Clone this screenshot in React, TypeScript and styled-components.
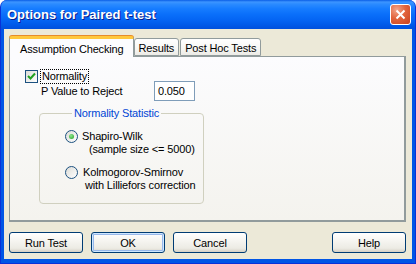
import React from 'react'
import styled, { createGlobalStyle } from 'styled-components'

const GlobalStyle = createGlobalStyle`
  html, body {
    margin: 0;
    padding: 0;
    background: #ffffff;
  }
  body {
    font-family: "Liberation Sans", Arial, sans-serif;
    font-size: 11px;
    letter-spacing: -0.15px;
    color: #000000;
  }
`

const Window = styled.div`
  width: 416px;
  height: 264px;
  box-sizing: border-box;
  display: flex;
  flex-direction: column;
  background: #0055e5;
  border: 1px solid #0831d9;
  border-top: none;
  border-radius: 7px 7px 0 0;
  overflow: hidden;
`

const TitleBar = styled.div`
  height: 29px;
  flex: none;
  display: flex;
  align-items: center;
  justify-content: space-between;
  padding: 0 4px 0 6px;
  background: linear-gradient(
    #0a5ee6 0%,
    #3d95ff 7%,
    #2b8bff 14%,
    #167cff 30%,
    #0a6ffa 50%,
    #0464f3 70%,
    #005ae9 85%,
    #0050dd 100%
  );
`

const Title = styled.span`
  font-family: "Liberation Sans", Arial, sans-serif;
  font-size: 13px;
  font-weight: bold;
  letter-spacing: 0;
  color: #ffffff;
  text-shadow: 1px 1px 0 #0a1e8c;
`

const CloseButton = styled.div`
  width: 19px;
  height: 19px;
  border: 1px solid #ffffff;
  border-radius: 3px;
  display: flex;
  align-items: center;
  justify-content: center;
  background: radial-gradient(circle at 30% 25%, #f2a58b 0%, #e2643c 45%, #c9411e 100%);
`

const Client = styled.div`
  flex: 1;
  margin: 0 3px 4px 3px;
  background: #ece9d8;
  display: flex;
  flex-direction: column;
  padding: 7px 6px 0 5px;
`

const TabStrip = styled.div`
  display: flex;
  align-items: flex-end;
  height: 20px;
  position: relative;
  z-index: 1;
`

const Tab = styled.div<{ $active?: boolean }>`
  box-sizing: border-box;
  height: ${({ $active }) => ($active ? '21px' : '18px')};
  margin-bottom: ${({ $active }) => ($active ? '-1px' : '0')};
  margin-right: ${({ $active }) => ($active ? '0' : '1px')};
  padding: ${({ $active }) => ($active ? '2px 9px 0 10px' : '1px 4px 0 4px')};
  display: flex;
  align-items: center;
  border: 1px solid #919b9c;
  border-bottom: ${({ $active }) => ($active ? 'none' : '1px solid #919b9c')};
  border-radius: 3px 3px 0 0;
  background: ${({ $active }) =>
    $active ? '#fcfcfe' : 'linear-gradient(#ffffff 0%, #f7f7f4 60%, #ecebe6 100%)'};
  border-top: ${({ $active }) => ($active ? '3px solid #ffc83c' : '1px solid #919b9c')};
  box-shadow: ${({ $active }) => ($active ? '0 -1px 0 #e68b2c' : 'none')};
  white-space: nowrap;
`

const Panel = styled.div`
  flex: none;
  height: 166px;
  box-sizing: border-box;
  border: 1px solid #919b9c;
  border-right-width: 2px;
  border-bottom-width: 2px;
  background: linear-gradient(#fcfcfe, #f4f3ee);
  padding: 12px 0 0 15px;
  display: flex;
  flex-direction: column;
`

const Row = styled.div<{ $indent?: number }>`
  display: flex;
  align-items: center;
  padding-left: ${({ $indent }) => $indent ?? 0}px;
`

const CheckBox = styled.div`
  width: 13px;
  height: 13px;
  box-sizing: border-box;
  border: 1px solid #1c5180;
  background: linear-gradient(135deg, #dcdcd7, #ffffff);
  display: flex;
  align-items: center;
  justify-content: center;
`

const FocusLabel = styled.span`
  margin-left: 2px;
  padding: 0 1px;
  border: 1px dotted #000000;
  line-height: 13px;
`

const FieldLabel = styled.span`
  width: 113px;
`

const TextInput = styled.div`
  width: 41px;
  height: 20px;
  box-sizing: border-box;
  border: 1px solid #7f9db9;
  background: #ffffff;
  display: flex;
  align-items: center;
  padding-left: 3px;
`

const Group = styled.fieldset`
  margin: 6px 0 0 14px;
  width: 165px;
  height: 97px;
  box-sizing: border-box;
  border: 1px solid #d0d0bf;
  border-radius: 4px;
  padding: 11px 0 0 25px;
  display: flex;
  flex-direction: column;
  gap: 10px;
`

const Legend = styled.legend`
  color: #0046d5;
  padding: 0 2px;
  margin-left: 7px;
`

const RadioOption = styled.div`
  display: flex;
  align-items: flex-start;
`

const Radio = styled.div<{ $checked?: boolean }>`
  width: 13px;
  height: 13px;
  box-sizing: border-box;
  border: 1px solid #1c5180;
  border-radius: 50%;
  flex: none;
  background: linear-gradient(135deg, #dcdcd7, #ffffff);
  display: flex;
  align-items: center;
  justify-content: center;
  &::after {
    content: '';
    display: ${({ $checked }) => ($checked ? 'block' : 'none')};
    width: 5px;
    height: 5px;
    border-radius: 50%;
    background: radial-gradient(circle at 40% 35%, #8fe58f, #21a121);
  }
`

const RadioText = styled.div`
  display: flex;
  flex-direction: column;
  margin-left: 4px;
  line-height: 13px;
`

const Line = styled.span<{ $indent?: number }>`
  padding-left: ${({ $indent }) => $indent ?? 0}px;
  white-space: nowrap;
`

const ButtonRow = styled.div`
  display: flex;
  margin-top: 10px;
  gap: 8px;
`

const Spacer = styled.div`
  flex: 1;
`

const Button = styled.div<{ $default?: boolean }>`
  width: 74px;
  height: 21px;
  box-sizing: border-box;
  border: 1px solid #003c74;
  border-radius: 3px;
  display: flex;
  align-items: center;
  justify-content: center;
  background: linear-gradient(#ffffff 0%, #f6f5f1 40%, #ecebe4 80%, #d6d0c5 100%);
  box-shadow: ${({ $default }) =>
    $default ? 'inset 0 0 0 1px #cee7ff, inset 0 0 0 2px #98b8ea' : 'none'};
`

export default function App() {
  return (
    <>
      <GlobalStyle />
      <Window>
        <TitleBar>
          <Title>Options for Paired t-test</Title>
          <CloseButton>
            <svg width="11" height="11" viewBox="0 0 11 11">
              <path d="M1.5 1.5 L9.5 9.5 M9.5 1.5 L1.5 9.5" stroke="#ffffff" strokeWidth="2" />
            </svg>
          </CloseButton>
        </TitleBar>
        <Client>
          <TabStrip>
            <Tab $active>Assumption Checking</Tab>
            <Tab>Results</Tab>
            <Tab>Post Hoc Tests</Tab>
          </TabStrip>
          <Panel>
            <Row>
              <CheckBox>
                <svg width="9" height="9" viewBox="0 0 9 9">
                  <path d="M1 4 L3.5 6.5 L8 1.5" fill="none" stroke="#21a121" strokeWidth="2" />
                </svg>
              </CheckBox>
              <FocusLabel>Normality</FocusLabel>
            </Row>
            <Row $indent={16} style={{ marginTop: -3 }}>
              <FieldLabel>P Value to Reject</FieldLabel>
              <TextInput>0.050</TextInput>
            </Row>
            <Group>
              <Legend>Normality Statistic</Legend>
              <RadioOption>
                <Radio $checked />
                <RadioText>
                  <Line>Shapiro-Wilk</Line>
                  <Line $indent={7}>(sample size &lt;= 5000)</Line>
                </RadioText>
              </RadioOption>
              <RadioOption>
                <Radio />
                <RadioText>
                  <Line $indent={1}>Kolmogorov-Smirnov</Line>
                  <Line $indent={3}>with Lilliefors correction</Line>
                </RadioText>
              </RadioOption>
            </Group>
          </Panel>
          <ButtonRow>
            <Button>Run Test</Button>
            <Button $default>OK</Button>
            <Button>Cancel</Button>
            <Spacer />
            <Button>Help</Button>
          </ButtonRow>
        </Client>
      </Window>
    </>
  )
}
